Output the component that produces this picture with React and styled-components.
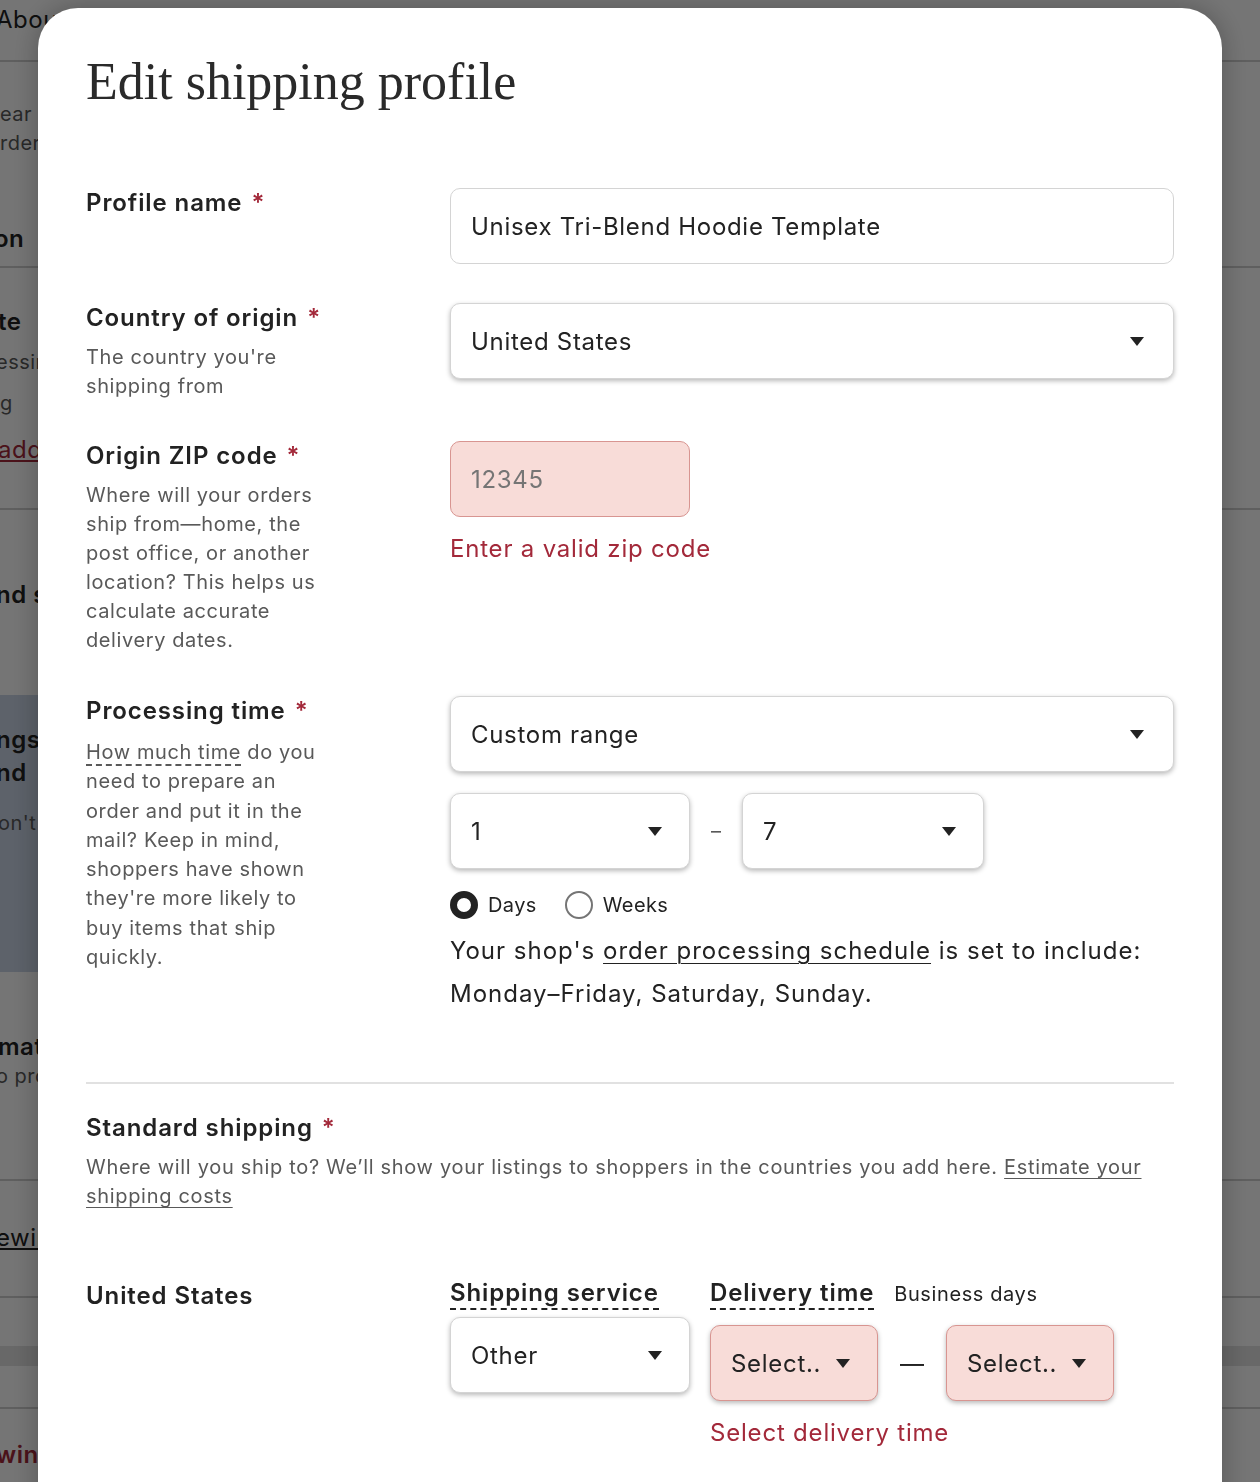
import React from 'react'
import styled, { createGlobalStyle } from 'styled-components'

const GlobalStyle = createGlobalStyle`
  html, body {
    margin: 0;
    padding: 0;
  }
  body {
    font-family: Inter, "Noto Sans", sans-serif;
    color: #222;
    background: #fff;
    overflow: hidden;
  }
  * {
    box-sizing: border-box;
  }
`

function Caret() {
    return (
        <svg width="14" height="9" viewBox="0 0 14 9">
            <polygon points="0,0 14,0 7,9" fill="#222" />
        </svg>
    )
}

function BackgroundPage() {
    return (
        <Page>
            <BgBlock h={62} line pt={5}>
                <BgText shift={-4}>About your shop</BgText>
            </BgBlock>
            <BgBlock h={206} line pt={38}>
                <BgText kind="body">ear estimates for your</BgText>
                <BgText kind="body">rders and shipping</BgText>
                <BgText kind="head" gap={66} shift={-6}>on <Star>*</Star></BgText>
            </BgBlock>
            <BgBlock h={242} line pt={39}>
                <BgText kind="head" shift={-2}>te</BgText>
                <BgText kind="body" gap={11} shift={-4}>essing time</BgText>
                <BgText kind="body" gap={12}>g</BgText>
                <BgText kind="link" gap={17} shift={-2}>add</BgText>
            </BgBlock>
            <BgBlock h={185} pt={70}>
                <BgText kind="head" shift={-4}>nd shipping</BgText>
            </BgBlock>
            <BgBlock h={277} tint pt={30}>
                <BgText kind="head" shift={-4}>ngs</BgText>
                <BgText kind="head" gap={3} shift={-4}>nd</BgText>
                <BgText kind="body" gap={21} shift={-2}>on't see</BgText>
            </BgBlock>
            <BgBlock h={209} line pt={60}>
                <BgText kind="head" shift={-2}>mat</BgText>
                <BgText kind="body" gap={0} shift={-4}>o profile</BgText>
            </BgBlock>
            <BgBlock h={117} line pt={42}>
                <BgText kind="link" dark shift={-4}>ewing</BgText>
            </BgBlock>
            <BgBlock h={48} />
            <BgBlock h={20} band />
            <BgBlock h={43} line />
            <BgBlock h={80} pt={31}>
                <BgText kind="red" shift={-4}>wing</BgText>
            </BgBlock>
        </Page>
    )
}

function App() {
    return (
        <>
            <GlobalStyle />
            <BackgroundPage />
            <Overlay>
                <Modal>
                    <Title>Edit shipping profile</Title>

                    <Row top={76}>
                        <div>
                            <Label>Profile name<Star>*</Star></Label>
                        </div>
                        <div>
                            <Field>Unisex Tri-Blend Hoodie Template</Field>
                        </div>
                    </Row>

                    <Row top={39}>
                        <div>
                            <Label>Country of origin<Star>*</Star></Label>
                            <Help>The country you're<br />shipping from</Help>
                        </div>
                        <div>
                            <Field raised pr={29}>United States <Caret /></Field>
                        </div>
                    </Row>

                    <Row top={40}>
                        <div>
                            <Label>Origin ZIP code<Star>*</Star></Label>
                            <Help>
                                Where will your orders<br />
                                ship from—home, the<br />
                                post office, or another<br />
                                location? This helps us<br />
                                calculate accurate<br />
                                delivery dates.
                            </Help>
                        </div>
                        <div>
                            <Field error muted w={240}>12345</Field>
                            <ErrorText>Enter a valid zip code</ErrorText>
                        </div>
                    </Row>

                    <Row top={41}>
                        <div>
                            <Label>Processing time<Star>*</Star></Label>
                            <Help first={12} lh={29.3}>
                                <Dotted>How much time</Dotted> do you<br />
                                need to prepare an<br />
                                order and put it in the<br />
                                mail? Keep in mind,<br />
                                shoppers have shown<br />
                                they're more likely to<br />
                                buy items that ship<br />
                                quickly.
                            </Help>
                        </div>
                        <div>
                            <Field raised pr={29}>Custom range <Caret /></Field>
                            <RangeRow>
                                <Field raised pr={27} w={240}>1 <Caret /></Field>
                                <SmallDash>–</SmallDash>
                                <Field raised pr={27} w={242}>7 <Caret /></Field>
                            </RangeRow>
                            <RadioRow>
                                <RadioOption>
                                    <RadioDot checked />
                                    Days
                                </RadioOption>
                                <RadioOption>
                                    <RadioDot />
                                    Weeks
                                </RadioOption>
                            </RadioRow>
                            <Schedule>
                                Your shop's <Link>order processing schedule</Link> is set to include:<br />
                                Monday–Friday, Saturday, Sunday.
                            </Schedule>
                        </div>
                    </Row>

                    <Divider />

                    <Section>
                        <Label>Standard shipping<Star>*</Star></Label>
                        <SectionHelp>
                            Where will you ship to? We’ll show your listings to shoppers in the countries you add here. <Link>Estimate your<br />shipping costs</Link>
                        </SectionHelp>
                    </Section>

                    <ServiceRow>
                        <CountryLabel>United States</CountryLabel>
                        <ServiceCol>
                            <ColHead>Shipping service</ColHead>
                            <Field raised pr={27} w={240}>Other <Caret /></Field>
                        </ServiceCol>
                        <DeliveryCol>
                            <HeadLine>
                                <ColHead>Delivery time</ColHead>
                                <Note>Business days</Note>
                            </HeadLine>
                            <DeliveryRange>
                                <Field error raised pr={27} w={168}>Select.. <Caret /></Field>
                                <LongDash>—</LongDash>
                                <Field error raised pr={27} w={168}>Select.. <Caret /></Field>
                            </DeliveryRange>
                            <ErrorText>Select delivery time</ErrorText>
                        </DeliveryCol>
                    </ServiceRow>
                </Modal>
            </Overlay>
        </>
    )
}

export default App

const Page = styled.div`
    height: 1482px;
    overflow: hidden;
`

const BgBlock = styled.div`
    height: ${p => p.h}px;
    width: ${p => p.tint ? '700px' : 'auto'};
    padding-top: ${p => p.pt || 0}px;
    border-bottom: ${p => p.line ? '2px solid #cfcfcf' : 'none'};
    background: ${p => p.tint ? '#cad5e6' : p.band ? '#e2e2e2' : 'transparent'};
    overflow: hidden;
`

const BgText = styled.div`
    margin-top: ${p => p.gap || 0}px;
    margin-left: ${p => p.shift || 0}px;
    white-space: nowrap;
    font-size: ${p => p.kind === 'body' ? 20 : 24}px;
    line-height: ${p => p.kind === 'body' ? 29 : 30}px;
    letter-spacing: 0.5px;
    font-weight: ${p => p.kind === 'head' || p.kind === 'red' ? 600 : 400};
    color: ${p => p.kind === 'body' ? '#595959' : p.kind === 'link' && !p.dark ? '#a3293a' : p.kind === 'red' ? '#a3293a' : '#222'};
    text-decoration: ${p => p.kind === 'link' ? 'underline' : 'none'};
`

const Overlay = styled.div`
    position: fixed;
    inset: 0;
    background: rgba(0, 0, 0, 0.54);
    display: flex;
    justify-content: center;
    align-items: flex-start;
    padding-top: 8px;
    overflow: hidden;
`

const Modal = styled.div`
    width: 1184px;
    min-height: 1600px;
    flex-shrink: 0;
    background: #fff;
    border-radius: 40px 40px 0 0;
    padding: 44px 48px 48px;
    box-shadow: 0 0 28px rgba(0, 0, 0, 0.28);
`

const Title = styled.h1`
    margin: 0;
    font-family: "Liberation Serif", serif;
    font-weight: 400;
    font-size: 52px;
    line-height: 60px;
    color: #2a2a2a;
`

const Row = styled.div`
    display: grid;
    grid-template-columns: 364px 1fr;
    margin-top: ${p => p.top}px;
`

const Label = styled.div`
    font-size: 24px;
    font-weight: 600;
    line-height: 30px;
    color: #222;
    letter-spacing: 0.9px;
`

const CountryLabel = styled(Label)`
    padding-top: 3px;
`

const Star = styled.span`
    color: #a3293a;
    margin-left: 9px;
`

const Help = styled.p`
    margin: ${p => p.first || 10}px 0 0;
    font-size: 20px;
    line-height: ${p => p.lh || 29}px;
    color: #595959;
    letter-spacing: 0.6px;
`

const Dotted = styled.span`
    border-bottom: 2px dashed #595959;
`

const Field = styled.div`
    height: 76px;
    width: ${p => p.w ? `${p.w}px` : '100%'};
    border: 1px solid ${p => p.error ? '#d89591' : '#d4d4d4'};
    background: ${p => p.error ? '#f8dcd8' : '#fff'};
    border-radius: 10px;
    display: flex;
    align-items: center;
    justify-content: space-between;
    padding: 0 ${p => p.pr || 20}px 0 20px;
    font-size: 24px;
    letter-spacing: 0.7px;
    color: ${p => p.muted ? '#757575' : '#222'};
    box-shadow: ${p => p.raised ? '0 2px 5px rgba(0, 0, 0, 0.28)' : 'none'};
    flex-shrink: 0;
`

const ErrorText = styled.div`
    margin-top: 17px;
    font-size: 24px;
    line-height: 30px;
    letter-spacing: 0.8px;
    color: #a3293a;
`

const RangeRow = styled.div`
    display: flex;
    align-items: center;
    margin-top: 21px;
`

const SmallDash = styled.span`
    width: 52px;
    text-align: center;
    font-size: 20px;
    color: #595959;
`

const RadioRow = styled.div`
    display: flex;
    gap: 28px;
    margin-top: 22px;
`

const RadioOption = styled.label`
    display: flex;
    align-items: center;
    gap: 10px;
    font-size: 20px;
    line-height: 28px;
    letter-spacing: 0.4px;
    color: #222;
`

const RadioDot = styled.span`
    width: 28px;
    height: 28px;
    border-radius: 50%;
    border: ${p => p.checked ? '7px solid #222' : '2px solid #757575'};
    background: #fff;
`

const Schedule = styled.p`
    margin: 10px 0 0;
    font-size: 24px;
    line-height: 43px;
    letter-spacing: 1px;
    color: #222;
`

const Link = styled.span`
    text-decoration: underline;
    text-underline-offset: 4px;
    text-decoration-thickness: 1px;
`

const Divider = styled.hr`
    margin: 67px 0 0;
    border: none;
    border-top: 2px solid #e1e1e1;
`

const Section = styled.div`
    margin-top: 29px;
`

const SectionHelp = styled.p`
    margin: 10px 0 0;
    font-size: 20px;
    line-height: 29px;
    letter-spacing: 0.68px;
    color: #595959;
`

const ServiceRow = styled.div`
    display: grid;
    grid-template-columns: 364px 260px 1fr;
    margin-top: 67px;
`

const ServiceCol = styled.div`
    display: flex;
    flex-direction: column;
    align-items: flex-start;
    gap: 7px;
`

const ColHead = styled.span`
    font-size: 24px;
    font-weight: 600;
    line-height: 30px;
    letter-spacing: 0.9px;
    color: #222;
    border-bottom: 2px dashed #222;
`

const DeliveryCol = styled.div`
    display: flex;
    flex-direction: column;
    align-items: flex-start;
`

const HeadLine = styled.div`
    display: flex;
    align-items: baseline;
    gap: 20px;
`

const Note = styled.span`
    font-size: 20px;
    letter-spacing: 0.6px;
    color: #222;
`

const DeliveryRange = styled.div`
    display: flex;
    align-items: center;
    margin-top: 15px;
`

const LongDash = styled.span`
    width: 68px;
    text-align: center;
    font-size: 24px;
    color: #222;
`
